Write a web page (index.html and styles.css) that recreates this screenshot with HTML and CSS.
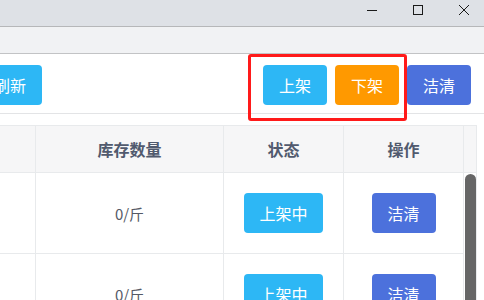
FILE: index.html
```html
<!DOCTYPE html>
<html lang="zh-CN">
<head>
<meta charset="utf-8">
<link rel="stylesheet" href="styles.css">
</head>
<body>
<div class="titlebar">
  <svg class="wc" viewBox="0 0 10 10"><rect class="fillbar" x="0" y="5" width="10" height="1"/></svg>
  <svg class="wc" viewBox="0 0 10 10"><rect x="0.5" y="0.5" width="9" height="9"/></svg>
  <svg class="wc" viewBox="0 0 10 10"><line x1="0" y1="0" x2="10" y2="10"/><line x1="10" y1="0" x2="0" y2="10"/></svg>
</div>
<div class="tabstrip"></div>
<div class="page">
  <div class="toolbar">
    <button class="btn info left">刷新</button>
    <div class="actions">
      <button class="btn info">上架</button>
      <button class="btn warn">下架</button>
      <button class="btn primary">洁清</button>
    </div>
    <div class="highlight"></div>
  </div>
  <div class="table">
    <div class="row head">
      <div class="cell c0"></div>
      <div class="cell c1">库存数量</div>
      <div class="cell c2">状态</div>
      <div class="cell c3">操作</div>
      <div class="cell gutter"></div>
    </div>
    <div class="body">
      <div class="rows">
        <div class="row">
          <div class="cell c0"></div>
          <div class="cell c1">0/斤</div>
          <div class="cell c2"><button class="btn info wide">上架中</button></div>
          <div class="cell c3"><button class="btn primary">洁清</button></div>
        </div>
        <div class="row">
          <div class="cell c0"></div>
          <div class="cell c1">0/斤</div>
          <div class="cell c2"><button class="btn info wide">上架中</button></div>
          <div class="cell c3"><button class="btn primary">洁清</button></div>
        </div>
      </div>
      <div class="scroll"><div class="thumb"></div></div>
    </div>
  </div>
</div>
</body>
</html>
```
FILE: styles.css
```css
* { box-sizing: border-box; }
html, body { margin: 0; padding: 0; }
body {
  width: 484px;
  height: 300px;
  overflow: hidden;
  background: #fff;
  font-family: "Noto Sans CJK SC", "Noto Sans", sans-serif;
}
.titlebar {
  height: 27px;
  background: #dee1e6;
  border-bottom: 1px solid #b6b7b9;
  display: flex;
  justify-content: flex-end;
  align-items: flex-start;
  gap: 36px;
  padding: 5px 15px 0 0;
}
.wc {
  width: 10px;
  height: 10px;
  overflow: visible;
  fill: none;
  stroke: #1a1a1a;
  stroke-width: 1;
}
.wc .fillbar { fill: #1a1a1a; stroke: none; }
.tabstrip {
  height: 27px;
  background: #f1f2f4;
  border-bottom: 1px solid #c2c3c5;
}
.page { position: relative; }
.toolbar {
  position: relative;
  height: 60px;
  border-bottom: 1px solid #e3e4e6;
  display: flex;
  justify-content: space-between;
  align-items: flex-start;
  padding: 11px 13px 0 0;
}
.actions { display: flex; gap: 8px; }
.btn {
  width: 64px;
  height: 40px;
  border: 0;
  border-radius: 4px;
  color: #fff;
  font-family: "Noto Sans CJK SC", sans-serif;
  font-size: 16px;
  padding: 0;
  line-height: 40px;
}
.btn.left { margin-left: -22px; }
.btn.info { background: #2db7f5; }
.btn.warn { background: #ff9900; }
.btn.primary { background: #4c71dc; }
.btn.wide { width: 79px; }
.highlight {
  position: absolute;
  left: 248px;
  top: 0;
  width: 159px;
  height: 67px;
  border: 3px solid #ff1a1a;
  border-radius: 3px;
}
.table {
  margin-top: 11px;
  width: 477px;
  border-top: 1px solid #e8eaec;
}
.row { display: flex; }
.cell {
  border-right: 1px solid #e8eaec;
  border-bottom: 1px solid #e8eaec;
  display: flex;
  align-items: center;
  justify-content: center;
  color: #555a66;
  font-size: 15px;
}
.head .cell {
  height: 47px;
  background: #f6f6f7;
  font-weight: bold;
  color: #515a6e;
  font-size: 16px;
}
.c0 { width: 36px; }
.c1 { width: 188px; }
.c2 { width: 120px; }
.c3 { width: 120px; }
.gutter { width: 13px; }
.body { display: flex; }
.rows .row .cell { height: 81px; }
.scroll {
  width: 13px;
  border-right: 1px solid #e8eaec;
  padding: 1px 0 0 1px;
}
.thumb {
  width: 11px;
  height: 140px;
  background: #666;
  border-radius: 6px 6px 0 0;
}
```
